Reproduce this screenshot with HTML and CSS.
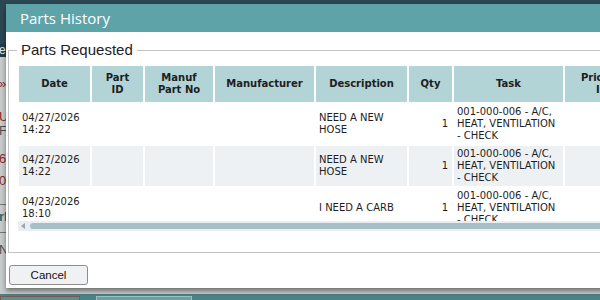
FILE: index.html
```html
<!DOCTYPE html>
<html>
<head>
<meta charset="utf-8">
<title>Parts History</title>
<link rel="stylesheet" href="styles.css">
</head>
<body>
<div class="page">
  <div class="topbar"></div>
  <div class="subbar"><span class="cut">er</span></div>
  <div class="side">
    <div class="side-row red r1">»</div>
    <div class="side-row red r2">US</div>
    <div class="side-row dark r3">F6</div>
    <div class="side-row red r4">6</div>
    <div class="side-row red r5">0</div>
    <div class="side-row teal r6">rl</div>
    <div class="side-row dark r7">N</div>
  </div>
  <div class="bottombar">
    <span class="tab tab-a"></span>
    <span class="tab tab-b"></span>
  </div>
</div>

<div class="dialog">
  <div class="titlebar">Parts History</div>
  <div class="dialog-body">
    <fieldset class="group">
      <legend class="group-title">Parts Requested</legend>
      <div class="grid-wrap">
        <table class="grid">
          <thead>
            <tr>
              <th class="c-date">Date</th>
              <th class="c-pid">Part<br>ID</th>
              <th class="c-mpn">Manuf<br>Part No</th>
              <th class="c-man">Manufacturer</th>
              <th class="c-desc">Description</th>
              <th class="c-qty">Qty</th>
              <th class="c-task">Task</th>
              <th class="c-prio">Priority<br>ID</th>
              <th class="c-more">Status</th>
            </tr>
          </thead>
          <tbody>
            <tr>
              <td>04/27/2026<br>14:22</td>
              <td></td>
              <td></td>
              <td></td>
              <td>NEED A NEW<br>HOSE</td>
              <td class="num">1</td>
              <td>001-000-006 - A/C, HEAT, VENTILATION - CHECK</td>
              <td></td>
              <td></td>
            </tr>
            <tr class="alt">
              <td>04/27/2026<br>14:22</td>
              <td></td>
              <td></td>
              <td></td>
              <td>NEED A NEW<br>HOSE</td>
              <td class="num">1</td>
              <td>001-000-006 - A/C, HEAT, VENTILATION - CHECK</td>
              <td></td>
              <td></td>
            </tr>
            <tr>
              <td>04/23/2026<br>18:10</td>
              <td></td>
              <td></td>
              <td></td>
              <td>I NEED A CARB</td>
              <td class="num">1</td>
              <td>001-000-006 - A/C, HEAT, VENTILATION - CHECK</td>
              <td></td>
              <td></td>
            </tr>
          </tbody>
        </table>
      </div>
      <div class="hscroll">
        <span class="hscroll-arrow"></span>
        <span class="hscroll-thumb"></span>
      </div>
    </fieldset>
  </div>
  <div class="dialog-footer">
    <button class="btn" type="button">Cancel</button>
  </div>
</div>
</body>
</html>
```

FILE: styles.css
```css
* { box-sizing: border-box; }

html, body {
  margin: 0;
  padding: 0;
  width: 600px;
  height: 300px;
  overflow: hidden;
}

body {
  font-family: "DejaVu Sans", Verdana, sans-serif;
  background: #c9cccc;
  position: relative;
}

/* background page (dimmed) */
.page {
  height: 300px;
  display: flex;
  flex-direction: column;
  background: #c9cccc;
}

.topbar {
  height: 44px;
  background: #2c4754;
}

.subbar {
  height: 13px;
  background: #223d48;
  color: #e8eef0;
  font: 12px/13px "Liberation Sans", Arial, sans-serif;
  overflow: hidden;
  white-space: nowrap;
}

.cut {
  display: block;
  margin-left: -1px;
}

.side {
  flex: 1;
  display: flex;
  flex-direction: column;
  font: 13px/14px "Liberation Sans", Arial, sans-serif;
  overflow: hidden;
  white-space: nowrap;
}

.side-row {
  height: 14px;
  margin-left: -1px;
}

.side-row.red { color: #8a2a2a; }
.side-row.dark { color: #4a4f50; }
.side-row.teal { color: #2c6a6e; font-weight: bold; }

.r1 { margin-top: 20px; }
.r2 { margin-top: 19px; }
.r3 { margin-top: 0; }
.r4 { margin-top: 14px; }
.r5 { margin-top: 8px; }
.r6 { margin-top: 16px; border-top: 1px solid #707878; padding-top: 5px; height: 20px; }
.r7 { margin-top: 8px; border-top: 1px solid #707878; padding-top: 10px; height: 26px; }

.bottombar {
  height: 6px;
  background: #4c8285;
  display: flex;
  gap: 16px;
  padding-top: 2px;
}

.tab {
  height: 6px;
  border: 1px solid #7a5a50;
  border-bottom: 0;
}

.tab-a { width: 80px; background: #5d8e90; }
.tab-b { width: 96px; background: #6aa0a3; border-color: #9ac0c2; }

/* dialog */
.dialog {
  position: absolute;
  left: 6px;
  top: 4px;
  width: 640px;
  height: 284px;
  background: #ffffff;
  display: flex;
  flex-direction: column;
  box-shadow: 0 3px 5px rgba(0, 0, 0, 0.45);
}

.titlebar {
  height: 28px;
  background: #5da3a8;
  color: #ffffff;
  font: 15px/28px "Open Sans", "Noto Sans", sans-serif;
  padding-left: 14px;
}

.dialog-body {
  padding: 9px 0 0 2px;
}

.group {
  margin: 0;
  border: 1px solid #c2c2c2;
  padding: 5px 0 21px 8px;
  min-width: 0;
}

.group-title {
  font: 15px/18px "Liberation Sans", Arial, sans-serif;
  color: #222222;
  padding: 0 4px;
}

.grid-wrap {
  height: 157px;
  overflow: hidden;
}

.grid {
  border-collapse: separate;
  border-spacing: 2px;
  table-layout: fixed;
  width: 722px;
  font-size: 10px;
  line-height: 12px;
  color: #1e1e1e;
}

.grid th {
  background: #b2d4d7;
  font-weight: bold;
  text-align: center;
  vertical-align: middle;
  padding: 6px 3px;
  color: #202020;
}

.grid td {
  padding: 2px 3px;
  vertical-align: middle;
  text-align: left;
  height: 40px;
}

.grid tr.alt td { background: #eef1f4; }

.grid td.num { text-align: right; padding-right: 4px; }

.c-date { width: 71px; }
.c-pid { width: 51px; }
.c-mpn { width: 68px; }
.c-man { width: 99px; }
.c-desc { width: 91px; }
.c-qty { width: 43px; }
.c-task { width: 109px; }
.c-prio { width: 74px; }
.c-more { width: 96px; }

.hscroll {
  height: 10px;
  background: #e8eef1;
  display: flex;
  align-items: center;
  margin-left: 1px;
}

.hscroll-arrow {
  width: 0;
  height: 0;
  margin-left: 3px;
  border-top: 3px solid transparent;
  border-bottom: 3px solid transparent;
  border-right: 4px solid #9aa6ab;
}

.hscroll-thumb {
  flex: 1;
  height: 6px;
  margin-left: 5px;
  background: #a7bfc9;
  border-radius: 3px;
}

.dialog-footer {
  padding: 11px 0 0 3px;
}

.btn {
  width: 79px;
  height: 20px;
  background: #f0f1f3;
  border: 1px solid #8d8d8d;
  border-radius: 3px;
  font: 11.5px/16px "Liberation Sans", Arial, sans-serif;
  color: #111111;
  padding: 0;
}
```
